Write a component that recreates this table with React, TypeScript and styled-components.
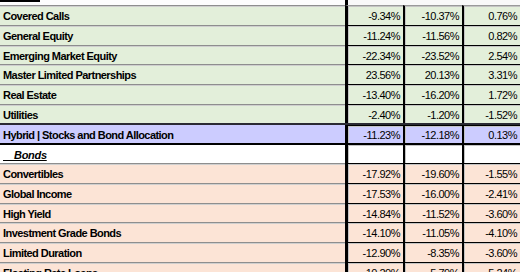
import React, { FunctionComponent } from "react"
import styled, { createGlobalStyle, css } from "styled-components"

type Tone = "green" | "purple" | "pink" | "white"

const tones: Record<Tone, string> = {
  green: "#e3efda",
  purple: "#ccccff",
  pink: "#fce4d6",
  white: "#ffffff",
}

const GlobalStyle = createGlobalStyle`
  html, body {
    margin: 0;
    padding: 0;
    background: #ffffff;
    overflow: hidden;
  }
  body {
    font-family: "Liberation Sans", Arial, sans-serif;
    color: #000;
  }
`

const Sheet = styled.div`
  width: 520px;
  height: 272px;
  overflow: hidden;
  display: flex;
  flex-direction: column;
`

// height includes the top rule
const Row = styled.div<{ $h: number; $rule?: "thick" | "black" }>`
  display: grid;
  grid-template-columns: 345px 58px 59px 58px;
  box-sizing: border-box;
  height: ${({ $h }) => $h}px;
  flex: 0 0 auto;
  ${({ $rule }) =>
    $rule === "thick" &&
    css`
      border-top: 2px solid #2a2a33;
    `}
  ${({ $rule }) =>
    $rule === "black" &&
    css`
      border-top: 2px solid #000;
    `}
`

const HeadLabel = styled.div`
  background: #fdfdfd;
`

const HeadBar = styled.div`
  width: 40px;
  height: 2px;
  background: #000;
`

const HeadCell = styled.div<{ $first?: boolean }>`
  background: #f9f9f9;
  border-left: ${({ $first }) => ($first ? "3px solid #000" : "none")};
`

const Label = styled.div<{ $tone: Tone; $plain?: boolean }>`
  display: flex;
  align-items: center;
  padding: 1px 0 0 3px;
  box-sizing: border-box;
  background: ${({ $tone }) => tones[$tone]};
  border-top: ${({ $plain }) => ($plain ? "none" : "1px solid #8e8e8e")};
  box-shadow: ${({ $plain }) => ($plain ? "none" : "inset 0 1px 0 #cfcfcf")};
  font-size: 11px;
  font-weight: bold;
  letter-spacing: -0.55px;
  white-space: nowrap;
  overflow: hidden;
`

const Section = styled.span`
  font-style: italic;
  text-decoration: underline;
  white-space: pre;
  letter-spacing: -0.3px;
`

const Num = styled.div<{ $tone: Tone; $first?: boolean; $plain?: boolean; $top?: boolean }>`
  display: flex;
  align-items: center;
  justify-content: flex-end;
  padding: 1px 3px 0 0;
  box-sizing: border-box;
  background: ${({ $tone }) => tones[$tone]};
  border-left: ${({ $first }) => ($first ? "3px" : "2px")} solid #000;
  border-top: ${({ $plain, $top }) =>
    $plain ? "none" : $top ? "1px solid #9a9a9a" : "1px solid #000"};
  box-shadow: inset 1px 1px 0 #c4c4c4;
  font-size: 11px;
  letter-spacing: -0.5px;
  white-space: nowrap;
`

type Line = {
  name: string
  values: [string, string, string]
  tone: Tone
  h: number
  rule?: "thick" | "black"
}

const lines: Line[] = [
  { name: "Covered Calls", values: ["-9.34%", "-10.37%", "0.76%"], tone: "green", h: 20 },
  { name: "General Equity", values: ["-11.24%", "-11.56%", "0.82%"], tone: "green", h: 20 },
  { name: "Emerging Market Equity", values: ["-22.34%", "-23.52%", "2.54%"], tone: "green", h: 19 },
  { name: "Master Limited Partnerships", values: ["23.56%", "20.13%", "3.31%"], tone: "green", h: 20 },
  { name: "Real Estate", values: ["-13.40%", "-16.20%", "1.72%"], tone: "green", h: 20 },
  { name: "Utilities", values: ["-2.40%", "-1.20%", "-1.52%"], tone: "green", h: 19 },
  {
    name: "Hybrid | Stocks and Bond Allocation",
    values: ["-11.23%", "-12.18%", "0.13%"],
    tone: "purple",
    h: 20,
    rule: "thick",
  },
]

const bonds: Line[] = [
  { name: "Convertibles", values: ["-17.92%", "-19.60%", "-1.55%"], tone: "pink", h: 20 },
  { name: "Global Income", values: ["-17.53%", "-16.00%", "-2.41%"], tone: "pink", h: 20 },
  { name: "High Yield", values: ["-14.84%", "-11.52%", "-3.60%"], tone: "pink", h: 19 },
  { name: "Investment Grade Bonds", values: ["-14.10%", "-11.05%", "-4.10%"], tone: "pink", h: 20 },
  { name: "Limited Duration", values: ["-12.90%", "-8.35%", "-3.60%"], tone: "pink", h: 20 },
  { name: "Floating Rate Loans", values: ["-10.20%", "-5.79%", "-5.24%"], tone: "pink", h: 20 },
]

const DataRow: FunctionComponent<{ line: Line; top?: boolean }> = ({ line, top }) => (
  <Row $h={line.h} $rule={line.rule}>
    <Label $tone={line.tone} $plain={!!line.rule}>
      {line.name}
    </Label>
    {line.values.map((v, i) => (
      <Num key={i} $tone={line.tone} $first={i === 0} $top={top}>
        {v}
      </Num>
    ))}
  </Row>
)

const App: FunctionComponent = () => (
  <>
    <GlobalStyle />
    <Sheet>
      <Row $h={5}>
        <HeadLabel>
          <HeadBar />
        </HeadLabel>
        <HeadCell $first />
        <HeadCell />
        <HeadCell />
      </Row>
      {lines.map((line, i) => (
        <DataRow key={line.name} line={line} top={i === 0} />
      ))}
      <Row $h={20} $rule="black">
        <Label $tone="white" $plain>
          <Section>{"    Bonds"}</Section>
        </Label>
        <Num $tone="white" $first $plain />
        <Num $tone="white" $plain />
        <Num $tone="white" $plain />
      </Row>
      {bonds.map((line) => (
        <DataRow key={line.name} line={line} />
      ))}
    </Sheet>
  </>
)

export default App
